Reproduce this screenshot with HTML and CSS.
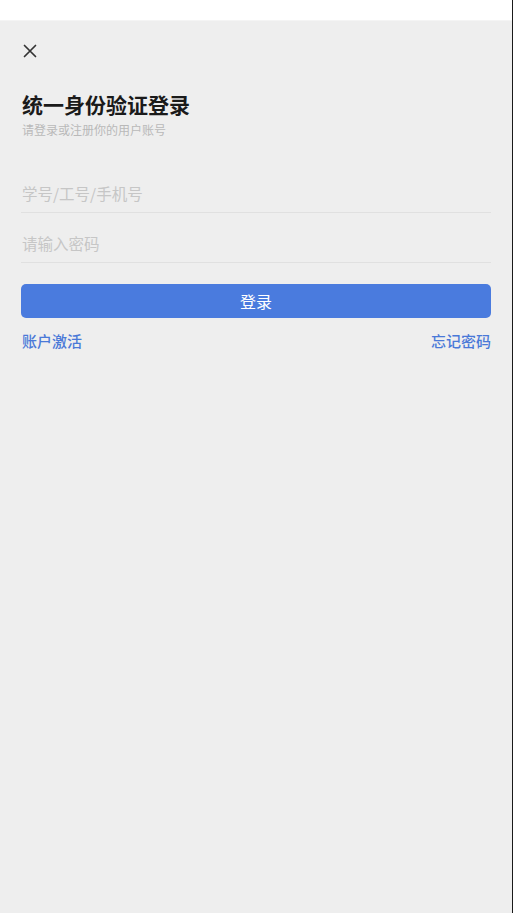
FILE: index.html
```html
<!DOCTYPE html>
<html lang="zh-CN">
<head>
<meta charset="utf-8">
<title>统一身份验证登录</title>
<link rel="stylesheet" href="styles.css">
</head>
<body>
<div class="statusbar"></div>
<main class="page">
  <button class="close" aria-label="关闭">
    <svg width="14" height="14" viewBox="0 0 14 14"><path d="M1.5 1.5L12.5 12.5M12.5 1.5L1.5 12.5" stroke="#333" stroke-width="1.7" stroke-linecap="round" fill="none"/></svg>
  </button>
  <h1 class="title">统一身份验证登录</h1>
  <p class="subtitle">请登录或注册你的用户账号</p>
  <form class="form">
    <div class="field"><input class="input" type="text" placeholder="学号/工号/手机号"></div>
    <div class="field field-last"><input class="input" type="password" placeholder="请输入密码"></div>
    <button type="button" class="submit">登录</button>
    <div class="links">
      <a class="link" href="#">账户激活</a>
      <a class="link" href="#">忘记密码</a>
    </div>
  </form>
</main>
</body>
</html>
```

FILE: styles.css
```css
html, body {
  margin: 0;
  padding: 0;
}
body {
  font-family: "Noto Sans CJK SC", "Noto Sans", sans-serif;
  background: #eeeeee;
  border-right: 1px solid #1a1a1a;
  min-height: 100vh;
  box-sizing: border-box;
}
.statusbar {
  height: 21px;
  background: #ffffff;
  border-bottom: 1px solid #f4f4f4;
  box-sizing: border-box;
}
.page {
  padding: 0 21px 0 21px;
  display: flex;
  flex-direction: column;
}
.close {
  margin: 23px 0 0 2px;
  padding: 0;
  width: 14px;
  height: 14px;
  border: none;
  background: none;
  display: block;
  align-self: flex-start;
  line-height: 0;
}
.title {
  margin: 32px 0 0 1px;
  font-size: 21px;
  line-height: 28px;
  font-weight: 600;
  color: #1a1a1a;
}
.subtitle {
  margin: 4px 0 0 1px;
  font-size: 12px;
  line-height: 16px;
  color: #b9b9b9;
}
.form {
  margin-top: 24px;
  display: flex;
  flex-direction: column;
}
.field {
  padding: 20px 0 8px 0;
  border-bottom: 1px solid #e0e0e0;
}
.field-last {
  padding-top: 19px;
}
.input {
  display: block;
  width: 100%;
  height: 22px;
  border: none;
  outline: none;
  background: transparent;
  padding: 0 0 0 1px;
  font-family: "Noto Sans CJK SC", "Noto Sans", sans-serif;
  font-size: 15.5px;
  line-height: 22px;
  color: #333;
}
.input::placeholder {
  color: #c6c6c6;
}
.submit {
  margin-top: 21px;
  height: 34px;
  border: none;
  border-radius: 5px;
  background: #4a7bde;
  color: #ffffff;
  font-family: "Noto Sans CJK SC", "Noto Sans", sans-serif;
  font-size: 16px;
  padding: 0;
}
.links {
  margin-top: 13px;
  display: flex;
  justify-content: space-between;
  padding: 0 0 0 1px;
}
.link {
  font-size: 15px;
  line-height: 20px;
  font-weight: 500;
  color: #4a79d8;
  text-decoration: none;
}
```
